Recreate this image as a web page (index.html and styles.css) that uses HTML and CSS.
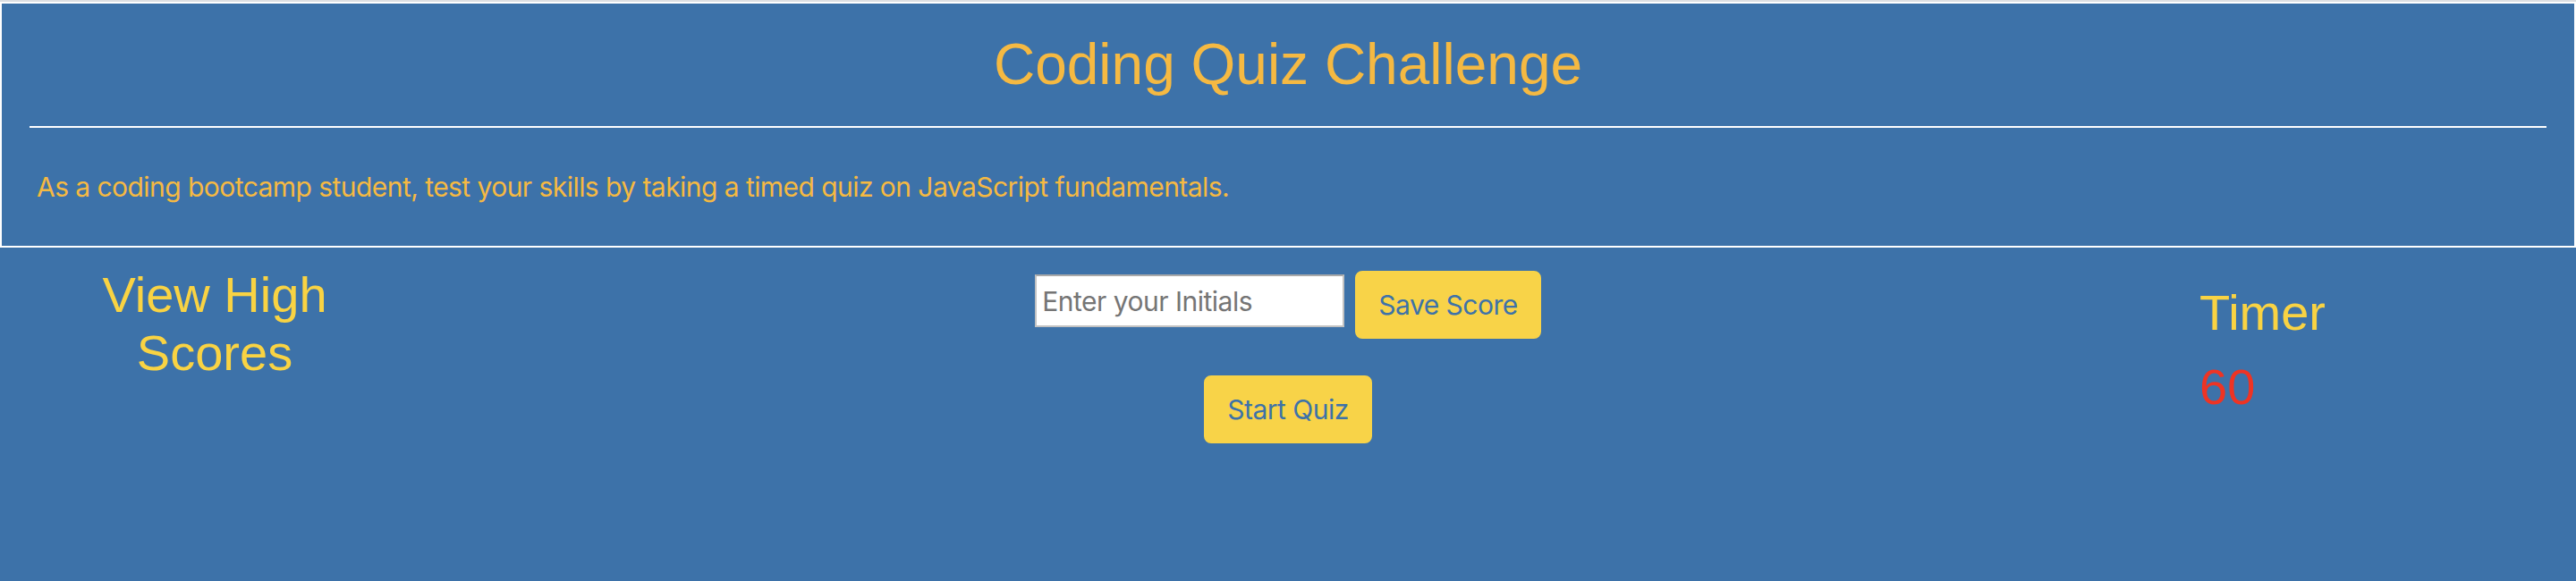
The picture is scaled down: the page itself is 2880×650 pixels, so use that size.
FILE: index.html
```html
<!DOCTYPE html>
<html lang="en">
<head>
<meta charset="utf-8">
<title>Coding Quiz Challenge</title>
<link rel="stylesheet" href="styles.css">
</head>
<body>
<div class="page">
  <header class="jumbo">
    <h1 class="title">Coding Quiz Challenge</h1>
    <hr class="rule">
    <p class="lead">As a coding bootcamp student, test your skills by taking a timed quiz on JavaScript fundamentals.</p>
  </header>
  <main class="board">
    <div class="side side-left">
      <h2 class="scores-link">View High Scores</h2>
    </div>
    <div class="center">
      <form class="save-row">
        <input class="initials" type="text" placeholder="Enter your Initials">
        <button class="btn" type="button">Save Score</button>
      </form>
      <button class="btn start" type="button">Start Quiz</button>
    </div>
    <div class="side side-right">
      <h2 class="timer-label">Timer</h2>
      <div class="timer-value">60</div>
    </div>
  </main>
</div>
</body>
</html>
```
FILE: styles.css
```css
html, body {
  margin: 0;
  padding: 0;
  background: #3d72a9;
  height: 100%;
}
.page {
  border-top: 2px solid #dcdee2;
  min-height: 100%;
  box-sizing: border-box;
}
.jumbo {
  border: 2px solid #ffffff;
  padding: 30px 31px 42px 31px;
  box-sizing: border-box;
}
.title {
  margin: 0;
  font-family: "Liberation Sans", Arial, sans-serif;
  font-weight: 400;
  font-size: 64px;
  line-height: 76px;
  color: #f5b942;
  text-align: center;
}
.rule {
  margin: 31px 0 42px 0;
  border: 0;
  border-top: 2px solid #ffffff;
  height: 0;
}
.lead {
  margin: 0;
  padding-left: 8px;
  font-family: Inter, "Noto Sans", sans-serif;
  font-size: 30px;
  letter-spacing: -0.55px;
  line-height: 48px;
  color: #f5b942;
}
.board {
  display: grid;
  grid-template-columns: 480px 1fr 480px;
}
.side-left {
  padding: 20px 30px 0 30px;
  text-align: center;
}
.scores-link, .timer-label {
  margin: 0;
  font-family: "Liberation Sans", Arial, sans-serif;
  font-weight: 400;
  font-size: 56px;
  line-height: 67px;
  color: #f9d343;
}
.scores-link {
  line-height: 65px;
}
.side-right {
  padding: 39px 30px 0 59px;
}
.timer-value {
  margin-top: 16px;
  font-family: "Liberation Sans", Arial, sans-serif;
  font-size: 56px;
  line-height: 67px;
  color: #ee3424;
}
.center {
  display: flex;
  flex-direction: column;
  align-items: center;
  padding-top: 26px;
  gap: 41px;
}
.save-row {
  display: flex;
  align-items: flex-start;
  gap: 12px;
  margin: 0;
}
.initials {
  margin-top: 4px;
  width: 346px;
  height: 59px;
  box-sizing: border-box;
  border: 2px solid #c2c2c2;
  border-top-color: #a9a9a9;
  padding: 0 6px;
  font-family: Inter, "Noto Sans", sans-serif;
  font-size: 30px;
  letter-spacing: -0.5px;
  color: #333;
  background: #fff;
}
.initials::placeholder {
  color: #757575;
}
.btn {
  font-family: Inter, "Noto Sans", sans-serif;
  font-size: 30px;
  letter-spacing: -0.5px;
  line-height: 48px;
  padding: 12px 24px;
  border: 2px solid #f8d348;
  border-radius: 8px;
  background: #f8d348;
  color: #3d72a9;
  cursor: pointer;
}
```
